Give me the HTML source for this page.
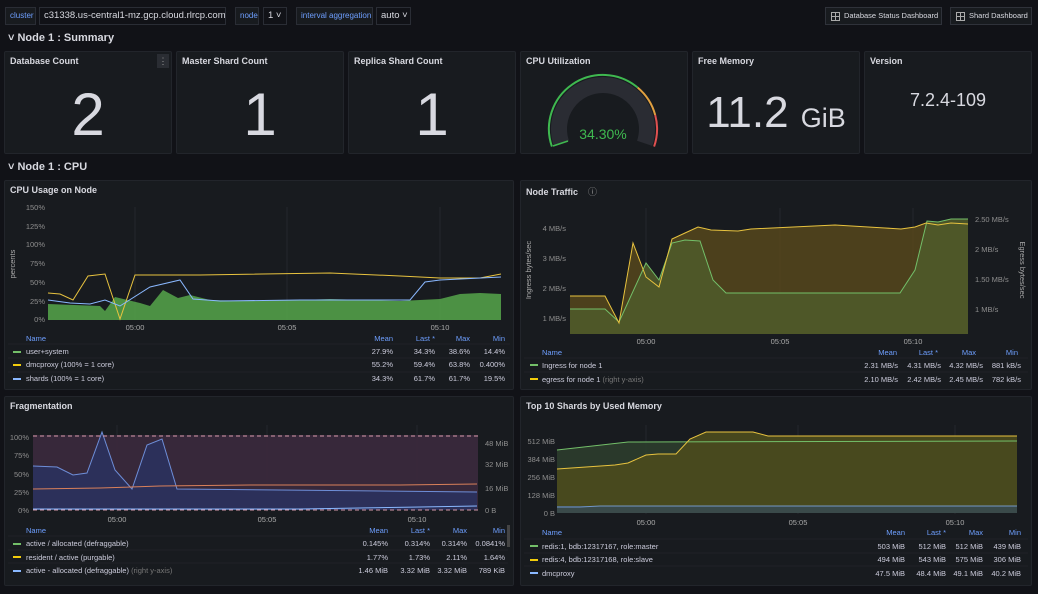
<!DOCTYPE html>
<html><head><meta charset="utf-8"><style>
*{box-sizing:border-box;margin:0;padding:0}
body{width:1038px;height:594px;background:#111217;font-family:"Liberation Sans",sans-serif;color:#ccccdc;position:relative;overflow:hidden}
.a{position:absolute}
.lbl,.val,.btn{white-space:nowrap;overflow:hidden}
.lbl{position:absolute;top:7px;height:18px;background:#181b1f;border:1px solid #2a2d35;color:#6e9fff;font-size:8px;line-height:16px;padding:0 4px}
.val{position:absolute;top:7px;height:18px;background:#111217;border:1px solid #2a2d35;color:#d8d9e0;font-size:9.5px;line-height:16px;padding:0 4px}
.btn{position:absolute;top:7px;height:18px;border:1px solid #2f323a;background:#181b1f;color:#d8d9e0;font-size:7.5px;line-height:16px;padding:0 4px 0 18px}
.btn:before{content:"";position:absolute;left:5px;top:4px;width:7px;height:7px;border:1px solid #aaa;background:linear-gradient(#aaa,#aaa) 3px 0/1px 7px no-repeat,linear-gradient(#aaa,#aaa) 0 3px/7px 1px no-repeat}
.row{position:absolute;left:8px;font-size:11px;font-weight:bold;color:#d8d9e0}
.p{position:absolute;background:#181b1f;border:1px solid #22252b;border-radius:2px}
.t{position:absolute;left:5px;top:4px;font-size:9px;font-weight:bold;color:#d8d9e0}
.big{position:absolute;left:0;right:0;text-align:center;color:#d8d9e0}
</style></head><body>
<div class="lbl" style="left:5px;width:31px">cluster</div>
<div class="val" style="left:39px;width:187px">c31338.us-central1-mz.gcp.cloud.rlrcp.com ˅</div>
<div class="lbl" style="left:235px;width:24px">node</div>
<div class="val" style="left:263px;width:24px">1 ˅</div>
<div class="lbl" style="left:296px;width:77px">interval aggregation</div>
<div class="val" style="left:376px;width:35px">auto ˅</div>
<div class="btn" style="left:825px;width:117px">Database Status Dashboard</div>
<div class="btn" style="left:950px;width:82px">Shard Dashboard</div>
<div class="row" style="top:32px">˅ Node 1 : Summary</div>
<div class="row" style="top:161px">˅ Node 1 : CPU</div>

<div class="p" style="left:4px;top:51px;width:168px;height:103px"><div class="t">Database Count</div><div class="a" style="right:2px;top:2px;width:12px;height:14px;background:#2a2d33;color:#999;font-size:9px;text-align:center;line-height:14px">⋮</div><div class="big" style="top:28px;font-size:60px">2</div></div>
<div class="p" style="left:176px;top:51px;width:168px;height:103px"><div class="t">Master Shard Count</div><div class="big" style="top:28px;font-size:60px">1</div></div>
<div class="p" style="left:348px;top:51px;width:168px;height:103px"><div class="t">Replica Shard Count</div><div class="big" style="top:28px;font-size:60px">1</div></div>
<div class="p" style="left:520px;top:51px;width:168px;height:103px"><div class="t">CPU Utilization</div></div>
<div class="p" style="left:692px;top:51px;width:168px;height:103px"><div class="t">Free Memory</div><div class="big" style="top:36px;font-size:44px">11.2 <span style="font-size:27px">GiB</span></div></div>
<div class="p" style="left:864px;top:51px;width:168px;height:103px"><div class="t">Version</div><div class="big" style="top:38px;font-size:18px">7.2.4-109</div></div>

<div class="p" style="left:4px;top:180px;width:510px;height:210px"><div class="t">CPU Usage on Node</div></div>
<div class="p" style="left:520px;top:180px;width:512px;height:210px"><div class="t">Node Traffic &nbsp;&nbsp; <span style="font-weight:normal;color:#999">ⓘ</span></div></div>
<div class="p" style="left:4px;top:396px;width:510px;height:190px"><div class="t">Fragmentation</div></div>
<div class="p" style="left:520px;top:396px;width:512px;height:190px"><div class="t">Top 10 Shards by Used Memory</div></div>

<svg class="a" style="left:0;top:0" width="1038" height="594" font-family="Liberation Sans, sans-serif" font-size="7.5">
<!-- gauge -->
<path d="M561.4,143.3 A44,44 0 1 1 644.6,143.3" fill="none" stroke="#2a2c33" stroke-width="16"/>
<path d="M551.9,146.6 A54,54 0 0 1 637.7,87.6" fill="none" stroke="#3fb950" stroke-width="2"/>
<path d="M637.7,87.6 A54,54 0 0 1 655.2,115" fill="none" stroke="#e0a040" stroke-width="2"/>
<path d="M655.2,115 A54,54 0 0 1 654.1,146.6" fill="none" stroke="#e05050" stroke-width="2"/>
<line x1="553" y1="146" x2="568" y2="141" stroke="#3fb950" stroke-width="1.5"/>
<text x="603" y="139" fill="#3fb950" font-size="14" text-anchor="middle">34.30%</text>

<g stroke="#2a2d33" stroke-width="0.7">
<line x1="135" y1="207" x2="135" y2="320"/><line x1="287" y1="207" x2="287" y2="320"/><line x1="440" y1="207" x2="440" y2="320"/>
<line x1="646" y1="208" x2="646" y2="334"/><line x1="780" y1="208" x2="780" y2="334"/><line x1="913" y1="208" x2="913" y2="334"/>
<line x1="117" y1="425" x2="117" y2="512"/><line x1="267" y1="425" x2="267" y2="512"/><line x1="417" y1="425" x2="417" y2="512"/>
<line x1="646" y1="425" x2="646" y2="514"/><line x1="798" y1="425" x2="798" y2="514"/><line x1="955" y1="425" x2="955" y2="514"/>
</g>
<!-- CPU -->
<g fill="#8e8e8e" text-anchor="end"><text x="45" y="210">150%</text><text x="45" y="229">125%</text><text x="45" y="247">100%</text><text x="45" y="266">75%</text><text x="45" y="285">50%</text><text x="45" y="304">25%</text><text x="45" y="322">0%</text></g>
<text transform="translate(15,264) rotate(-90)" fill="#aaa" text-anchor="middle">percents</text>
<polygon fill="#56a64b" fill-opacity="0.85" points="48,320 48,304 100,306 105,311 115,297 140,303 150,306 163,290 178,298 190,295 210,300 250,301 300,300 330,299 400,301 420,300 440,299 460,294 480,293 501,294 501,320"/>
<polyline fill="none" stroke="#e8c33f" stroke-width="1" points="48,293 60,294 73,300 88,276 105,274 120,319 135,275 200,275 330,273 400,276 440,278 480,278 501,274"/>
<polyline fill="none" stroke="#8ab8ff" stroke-width="1" points="48,300 70,303 90,304 105,300 120,306 150,287 180,280 193,299 220,301 300,300 410,300 425,282 440,280 501,277"/>
<g fill="#aaa" text-anchor="middle"><text x="135" y="330">05:00</text><text x="287" y="330">05:05</text><text x="440" y="330">05:10</text></g>
<g fill="#6e9fff"><text x="26" y="341">Name</text><g text-anchor="end"><text x="393" y="341">Mean</text><text x="435" y="341">Last *</text><text x="470" y="341">Max</text><text x="505" y="341">Min</text></g></g>
<g stroke="#22252b" stroke-width="0.7"><line x1="8" y1="344" x2="510" y2="344"/><line x1="8" y1="358" x2="510" y2="358"/><line x1="8" y1="372" x2="510" y2="372"/></g>
<g fill="#ccccdc"><rect x="13" y="351" width="8" height="2" fill="#73bf69"/><text x="26" y="354">user+system</text><text x="393" y="354" text-anchor="end">27.9%</text><text x="435" y="354" text-anchor="end">34.3%</text><text x="470" y="354" text-anchor="end">38.6%</text><text x="505" y="354" text-anchor="end">14.4%</text>
<rect x="13" y="364" width="8" height="2" fill="#f2cc0c"/><text x="26" y="367">dmcproxy (100% = 1 core)</text><text x="393" y="367" text-anchor="end">55.2%</text><text x="435" y="367" text-anchor="end">59.4%</text><text x="470" y="367" text-anchor="end">63.8%</text><text x="505" y="367" text-anchor="end">0.400%</text>
<rect x="13" y="378" width="8" height="2" fill="#8ab8ff"/><text x="26" y="381">shards (100% = 1 core)</text><text x="393" y="381" text-anchor="end">34.3%</text><text x="435" y="381" text-anchor="end">61.7%</text><text x="470" y="381" text-anchor="end">61.7%</text><text x="505" y="381" text-anchor="end">19.5%</text></g>

<!-- Traffic -->
<g fill="#8e8e8e" text-anchor="end"><text x="566" y="231">4 MB/s</text><text x="566" y="261">3 MB/s</text><text x="566" y="291">2 MB/s</text><text x="566" y="321">1 MB/s</text></g>
<g fill="#8e8e8e"><text x="975" y="222">2.50 MB/s</text><text x="975" y="252">2 MB/s</text><text x="975" y="282">1.50 MB/s</text><text x="975" y="312">1 MB/s</text></g>
<text transform="translate(531,270) rotate(-90)" fill="#aaa" text-anchor="middle">Ingress bytes/sec</text>
<text transform="translate(1020,270) rotate(90)" fill="#aaa" text-anchor="middle">Egress bytes/sec</text>
<polygon fill="#5a4a1c" fill-opacity="0.8" points="570,334 570,296 605,296 619,323 633,243 646,277 659,287 672,239 685,233 698,227 711,230 738,231 751,229 835,225 885,228 901,229 915,227 926,223 938,225 951,223 968,224 968,334"/>
<polygon fill="#4f5a2a" fill-opacity="0.9" points="570,334 570,309 605,309 619,322 646,263 659,280 672,243 685,240 700,241 713,280 726,293 900,293 915,270 927,221 938,222 951,219 968,219 968,334"/>
<polyline fill="none" stroke="#73bf69" points="570,309 605,309 619,322 646,263 659,280 672,243 685,240 700,241 713,280 726,293 900,293 915,270 927,221 938,222 951,219 968,219"/>
<polyline fill="none" stroke="#e8c33f" points="570,296 605,296 619,323 633,243 646,277 659,287 672,239 685,233 698,227 711,230 738,231 751,229 835,225 885,228 901,229 915,227 926,223 938,225 951,223 968,224"/>
<g fill="#aaa" text-anchor="middle"><text x="646" y="344">05:00</text><text x="780" y="344">05:05</text><text x="913" y="344">05:10</text></g>
<g fill="#6e9fff"><text x="542" y="355">Name</text><g text-anchor="end"><text x="897" y="355">Mean</text><text x="938" y="355">Last *</text><text x="976" y="355">Max</text><text x="1018" y="355">Min</text></g></g>
<g stroke="#22252b" stroke-width="0.7"><line x1="524" y1="358" x2="1028" y2="358"/><line x1="524" y1="372" x2="1028" y2="372"/></g>
<g fill="#ccccdc"><rect x="530" y="364" width="8" height="2" fill="#73bf69"/><text x="542" y="368">Ingress for node 1</text><text x="898" y="368" text-anchor="end">2.31 MB/s</text><text x="941" y="368" text-anchor="end">4.31 MB/s</text><text x="983" y="368" text-anchor="end">4.32 MB/s</text><text x="1021" y="368" text-anchor="end">881 kB/s</text>
<rect x="530" y="378" width="8" height="2" fill="#f2cc0c"/><text x="542" y="382">egress for node 1 <tspan fill="#777">(right y-axis)</tspan></text><text x="898" y="382" text-anchor="end">2.10 MB/s</text><text x="941" y="382" text-anchor="end">2.42 MB/s</text><text x="983" y="382" text-anchor="end">2.45 MB/s</text><text x="1021" y="382" text-anchor="end">782 kB/s</text></g>

<!-- Fragmentation -->
<rect x="33" y="435" width="445" height="75" fill="#3b2a3d" fill-opacity="0.9"/>
<polygon fill="#2a3160" fill-opacity="0.85" points="33,510 33,466 57,467 73,475 87,473 102,432 115,470 132,489 147,445 162,439 177,489 477,492 477,510"/>
<polyline fill="none" stroke="#6e8ed8" points="33,466 57,467 73,475 87,473 102,432 115,470 132,489 147,445 162,439 177,489 477,492"/>
<polyline fill="none" stroke="#d9805a" points="33,489 100,488 160,486 250,485 400,485 477,484"/>
<polyline fill="none" stroke="#8ab8ff" points="33,509 300,509 420,507 477,506"/>
<line x1="33" y1="436" x2="478" y2="436" stroke="#d59aa8" stroke-dasharray="4,3"/>
<line x1="33" y1="510" x2="478" y2="510" stroke="#d59aa8" stroke-dasharray="4,3"/>
<g fill="#8e8e8e" text-anchor="end"><text x="29" y="440">100%</text><text x="29" y="458">75%</text><text x="29" y="477">50%</text><text x="29" y="495">25%</text><text x="29" y="513">0%</text></g>
<g fill="#8e8e8e"><text x="485" y="446">48 MiB</text><text x="485" y="467">32 MiB</text><text x="485" y="491">16 MiB</text><text x="485" y="513">0 B</text></g>
<g fill="#aaa" text-anchor="middle"><text x="117" y="522">05:00</text><text x="267" y="522">05:05</text><text x="417" y="522">05:10</text></g>
<g fill="#6e9fff"><text x="26" y="533">Name</text><g text-anchor="end"><text x="388" y="533">Mean</text><text x="430" y="533">Last *</text><text x="467" y="533">Max</text><text x="505" y="533">Min</text></g></g>
<g stroke="#22252b" stroke-width="0.7"><line x1="8" y1="536" x2="508" y2="536"/><line x1="8" y1="550" x2="508" y2="550"/><line x1="8" y1="563" x2="508" y2="563"/></g>
<rect x="507" y="525" width="3" height="22" fill="#444"/>
<g fill="#ccccdc"><rect x="13" y="543" width="8" height="2" fill="#73bf69"/><text x="26" y="546">active / allocated (defraggable)</text><text x="388" y="546" text-anchor="end">0.145%</text><text x="430" y="546" text-anchor="end">0.314%</text><text x="467" y="546" text-anchor="end">0.314%</text><text x="505" y="546" text-anchor="end">0.0841%</text>
<rect x="13" y="556" width="8" height="2" fill="#f2cc0c"/><text x="26" y="560">resident / active (purgable)</text><text x="388" y="560" text-anchor="end">1.77%</text><text x="430" y="560" text-anchor="end">1.73%</text><text x="467" y="560" text-anchor="end">2.11%</text><text x="505" y="560" text-anchor="end">1.64%</text>
<rect x="13" y="570" width="8" height="2" fill="#8ab8ff"/><text x="26" y="573">active - allocated (defraggable) <tspan fill="#777">(right y-axis)</tspan></text><text x="388" y="573" text-anchor="end">1.46 MiB</text><text x="430" y="573" text-anchor="end">3.32 MiB</text><text x="467" y="573" text-anchor="end">3.32 MiB</text><text x="505" y="573" text-anchor="end">789 KiB</text></g>

<!-- Top 10 -->
<polygon fill="#2c3d2c" fill-opacity="0.9" points="557,513 557,450 628,442 1017,441 1017,513"/>
<polygon fill="#4a4a1e" fill-opacity="0.95" points="557,513 557,469 615,465 628,463 646,455 658,454 676,454 690,439 706,432 753,432 768,436 1017,436 1017,513"/>
<rect x="557" y="506" width="460" height="7" fill="#3a4a4a"/>
<polyline fill="none" stroke="#73bf69" points="557,450 628,442 1017,441"/>
<polyline fill="none" stroke="#e8c33f" points="557,469 615,465 628,463 646,455 658,454 676,454 690,439 706,432 753,432 768,436 1017,436"/>
<polyline fill="none" stroke="#8ab8ff" stroke-opacity="0.7" points="557,507 580,507 600,506 1017,506"/>
<g fill="#8e8e8e" text-anchor="end"><text x="555" y="444">512 MiB</text><text x="555" y="462">384 MiB</text><text x="555" y="480">256 MiB</text><text x="555" y="498">128 MiB</text><text x="555" y="516">0 B</text></g>
<g fill="#aaa" text-anchor="middle"><text x="646" y="525">05:00</text><text x="798" y="525">05:05</text><text x="955" y="525">05:10</text></g>
<g fill="#6e9fff"><text x="542" y="535">Name</text><g text-anchor="end"><text x="905" y="535">Mean</text><text x="946" y="535">Last *</text><text x="983" y="535">Max</text><text x="1021" y="535">Min</text></g></g>
<g stroke="#22252b" stroke-width="0.7"><line x1="524" y1="539" x2="1028" y2="539"/><line x1="524" y1="553" x2="1028" y2="553"/><line x1="524" y1="566" x2="1028" y2="566"/></g>
<g fill="#ccccdc"><rect x="530" y="545" width="8" height="2" fill="#73bf69"/><text x="542" y="549">redis:1, bdb:12317167, role:master</text><text x="905" y="549" text-anchor="end">503 MiB</text><text x="946" y="549" text-anchor="end">512 MiB</text><text x="983" y="549" text-anchor="end">512 MiB</text><text x="1021" y="549" text-anchor="end">439 MiB</text>
<rect x="530" y="559" width="8" height="2" fill="#f2cc0c"/><text x="542" y="562">redis:4, bdb:12317168, role:slave</text><text x="905" y="562" text-anchor="end">494 MiB</text><text x="946" y="562" text-anchor="end">543 MiB</text><text x="983" y="562" text-anchor="end">575 MiB</text><text x="1021" y="562" text-anchor="end">306 MiB</text>
<rect x="530" y="572" width="8" height="2" fill="#8ab8ff"/><text x="542" y="576">dmcproxy</text><text x="905" y="576" text-anchor="end">47.5 MiB</text><text x="946" y="576" text-anchor="end">48.4 MiB</text><text x="983" y="576" text-anchor="end">49.1 MiB</text><text x="1021" y="576" text-anchor="end">40.2 MiB</text></g>
</svg>
</body></html>
